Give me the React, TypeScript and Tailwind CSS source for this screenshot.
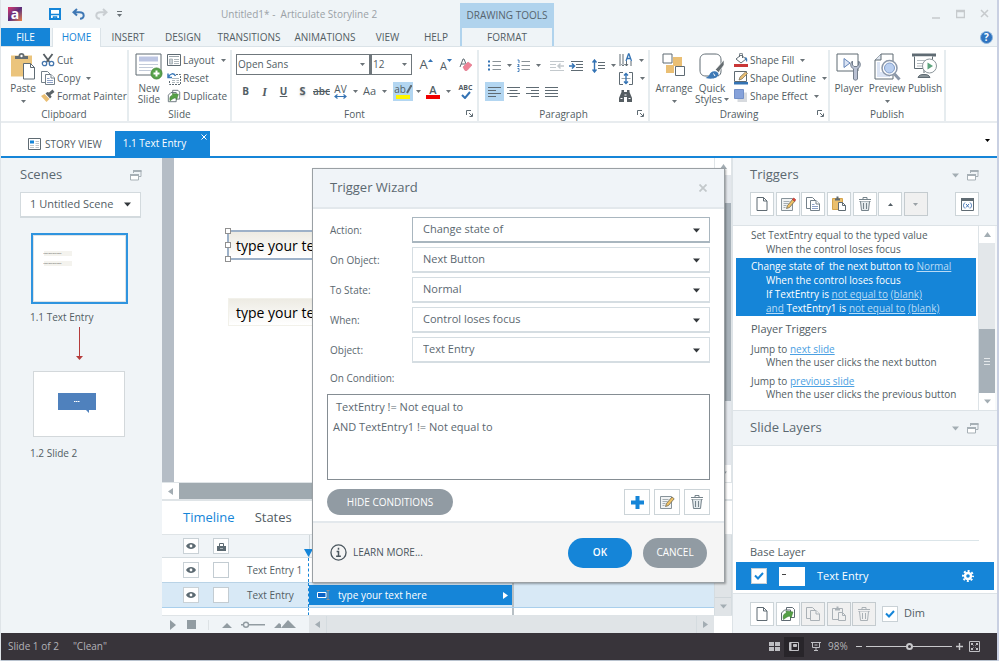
import type { ReactNode } from "react";

const INK = "#5f6b73";
const BLUE = "#1585d8";

function Svg({ box, className, children }: { box: string; className: string; children: ReactNode }) {
  return (
    <svg viewBox={box} className={`shrink-0 ${className}`} fill="none" stroke={INK} aria-hidden="true">
      {children}
    </svg>
  );
}

function Caret({ className = "text-[#6b7378]" }: { className?: string }) {
  return (
    <svg viewBox="0 0 5 3" className={`h-[3px] w-[5px] shrink-0 ${className}`} fill="currentColor" aria-hidden="true">
      <path d="M0 0h5L2.5 3z" />
    </svg>
  );
}

function Arrow({ dir, className = "text-[#a3adb3]" }: { dir: "up" | "down" | "left" | "right"; className?: string }) {
  const d = {
    up: "M0 6h7L3.500 1z",
    down: "M0 1.500h7L3.500 5.500z",
    left: "M6 0v7L1 3.500z",
    right: "M1 0v7L6 3.500z",
  }[dir];
  return (
    <svg viewBox="0 0 7 7" className={`size-[7px] shrink-0 ${className}`} fill="currentColor" aria-hidden="true">
      <path d={d} />
    </svg>
  );
}

/* ---------- icons ---------- */

const NewPageIcon = ({ className = "size-4" }: { className?: string }) => (
  <Svg box="0 0 16 16" className={className}>
    <path d="M3 1.500h6.500l3.500 3.500v9.500H3z" fill="#fff" />
    <path d="M9.500 1.500V5H13" />
  </Svg>
);

const CopyIcon = ({ muted = false }: { muted?: boolean }) => (
  <Svg box="0 0 16 16" className="size-4">
    <g stroke={muted ? "#aab1b6" : "#74818a"} fill={muted ? "#f0f0f0" : "#fff"}>
      <path d="M1.500 1.500h6l3 3v8h-9z" />
      <path d="M5.500 4.500h5.500l3.500 3.500v6.500h-9z" />
      <path d="M11 4.500V8h3.500" />
      {!muted && <path d="M7 8.500h2.500M7 10.500h6M7 12.500h6" stroke="#8ba0c6" />}
    </g>
  </Svg>
);

const ClipIcon = ({ muted = false }: { muted?: boolean }) => (
  <Svg box="0 0 16 16" className="size-4">
    <g stroke={muted ? "#aab1b6" : INK}>
      <path d="M1.500 2.500h10v11h-10z" fill={muted ? "#f0f0f0" : "#ebc06e"} stroke={muted ? "#aab1b6" : "#d4a44c"} />
      <path d="M4 3.500h5M5.500 1.500h2" strokeWidth="2" />
      <path d="M7.500 6.500h4l3 3v5h-7z" fill={muted ? "#f0f0f0" : "#fff"} />
      <path d="M11.500 6.500v3h3" />
    </g>
  </Svg>
);

const TrashIcon = ({ muted = false }: { muted?: boolean }) => (
  <Svg box="0 0 16 16" className="size-4">
    <g stroke={muted ? "#aab1b6" : "#75838b"}>
      <path d="M2 3.500h12M6 3V1.500h4V3" />
      <path d="M2.500 5.500h11" />
      <path d="M3.500 5.500l1 9h7l1-9" fill={muted ? "#f0f0f0" : "#e3e9ec"} />
      <path d="M6.500 7v6M9.500 7v6" />
    </g>
  </Svg>
);

const EditIcon = ({ red = false }: { red?: boolean }) => (
  <Svg box="0 0 16 16" className="size-4">
    <path d="M1.500 2.500h11v12h-11z" fill="#f1f3f4" stroke="#87939a" />
    <path d="M3.500 5.500h6M3.500 7.500h5M3.500 9.500h3M3.500 11.500h2" stroke="#a5aeb3" />
    <path d="M6.500 12.500l1-3L13 3l2.200 1.800L9.500 11.500z" fill="#efc164" stroke="#6f6a55" strokeWidth=".8" />
    {red && <path d="M12.500 3.500l1.200-1.500 2 1.700-1.200 1.500z" fill="#dd4a3e" stroke="#b8382e" strokeWidth=".8" />}
  </Svg>
);

const SlideDuplicateIcon = ({ className = "size-4" }: { className?: string }) => (
  <Svg box="0 0 16 16" className={className}>
    <path d="M6.500 1.500h6l2 2v8h-8z" fill="#fff" />
    <path d="M1.500 7l3-3h6v10.500h-9z" fill="#fff" />
    <path d="M3.500 13.500c-1-4 .5-6 3-6.500l-.5-2 7 1-2 6-1.500-2c-2 .5-3.500 1.500-6 3.500z" fill="#55a046" stroke="#3d7d34" strokeWidth=".6" />
  </Svg>
);

const RestoreIcon = () => (
  <Svg box="0 0 12 12" className="size-3">
    <g stroke="#a7b0b6">
      <path d="M3.500 4V1.500h7.500v6H9" />
      <path d="M3 2h8.500" strokeWidth="2" />
      <path d="M.5 5.500h8v5.500h-8z" fill="#fff" />
      <path d="M0 6h9" strokeWidth="2" />
    </g>
  </Svg>
);

const EyeIcon = () => (
  <svg viewBox="0 0 10 8" className="h-2 w-[10px]" fill="#5c6a72" aria-hidden="true">
    <path d="M0 4C2 0 8 0 10 4 8 8 2 8 0 4z" />
    <circle cx="5" cy="4" r="1.400" fill="#fff" />
  </svg>
);

const BackArrowIcon = ({ color, flip = false }: { color: string; flip?: boolean }) => (
  <svg viewBox="0 0 13 12" className={`h-3 w-[13px] ${flip ? "-scale-x-100" : ""}`} fill="none" stroke={color} strokeWidth="2" aria-hidden="true">
    <path d="M5 1L1.500 4.200 5 7.500M2 4.200h5.500c5.500 0 5.500 6.500.5 6.500" />
  </svg>
);

const PasteIcon = () => (
  <Svg box="0 0 24 27" className="h-[27px] w-6">
    <path d="M0 2.500h21v21H0z" fill="#ebc47c" stroke="none" />
    <path d="M4 6h13V3h-3.500a3 3 0 0 0-6 0H4z" fill="#646c70" stroke="none" />
    <circle cx="10.500" cy="3" r="1.200" fill="#fff" stroke="none" />
    <path d="M12.500 10.500h7l4 4v11.500h-11z" fill="#fff" />
    <path d="M19.500 10.500v4h4" />
  </Svg>
);

const CutIcon = () => (
  <Svg box="0 0 14 14" className="size-[14px]">
    <path d="M2.500 1l6 8M11.500 1l-6 8" stroke="#555d62" strokeWidth="1.800" />
    <circle cx="3.500" cy="10.500" r="2.200" stroke="#4476ad" strokeWidth="1.300" />
    <circle cx="10.500" cy="10.500" r="2.200" stroke="#4476ad" strokeWidth="1.300" />
  </Svg>
);

const PainterIcon = () => (
  <Svg box="0 0 14 14" className="size-[14px]">
    <path d="M0 7l3.500-2 5 5L5.500 13z" fill="#eabf74" stroke="none" />
    <path d="M4.500 4.500L9 9.500l1.700-1.700-1.200-1.800 4-3L11.500.5 8 3.500 6.300 3z" fill="#5b6368" stroke="none" />
  </Svg>
);

const NewSlideIcon = () => (
  <Svg box="0 0 28 27" className="h-[27px] w-7">
    <path d="M1 1h25v21H1z" fill="#fff" />
    <path d="M4 3.500h19v5H4z" fill="#bcc5e2" stroke="none" />
    <path d="M4 11.500h19M4 14.500h14M4 17.500h12" stroke="#c3cbd9" />
    <circle cx="21.500" cy="20.500" r="5.500" fill="#56a34a" stroke="#4b8c41" />
    <path d="M21.500 17.500v6M18.500 20.500h6" stroke="#fff" strokeWidth="2" />
  </Svg>
);

const LayoutIcon = () => (
  <Svg box="0 0 14 12" className="h-3 w-[14px]">
    <path d="M.5.500h13v11H.5z" fill="#fff" />
    <path d="M2 2.500h10" stroke="#9aa4aa" />
    <path d="M2.500 5h3v5h-3z" fill="#c9d0d4" stroke="#9aa4aa" strokeWidth=".7" />
    <path d="M7 5.500h5M7 7.500h5M7 9.500h5" stroke="#aeb7bc" />
  </Svg>
);

const ResetIcon = () => (
  <Svg box="0 0 14 13" className="h-[13px] w-[14px]">
    <path d="M9 2.500h4.500v10h-11V8" strokeDasharray="2 1" />
    <path d="M5 6.500h7M5 8.500h3M5 10.500h3M9.500 8.500H12M9.500 10.500H12" stroke="#aeb7bc" />
    <path d="M1 1.500v4h4M1.500 5C3 1.500 7 .5 8.500 4" stroke="#3b79b8" strokeWidth="1.500" />
  </Svg>
);

const LauncherIcon = () => (
  <Svg box="0 0 7 7" className="size-[7px]">
    <path d="M.5 5V.5H5M3 3l3 3M6.500 3.500v3h-3" />
  </Svg>
);

const ListIcon = ({ numbered = false }: { numbered?: boolean }) => (
  <Svg box="0 0 13 13" className="size-[13px]">
    <path d="M4.500 2.500H13M4.500 6.500H13M4.500 10.500H13" stroke="#8a9297" />
    {numbered ? (
      <path d="M.5 1H2v3M.5 5.500H2v1L.5 7.500H2.500M.5 9.500H2v3H.5" stroke="#3473b4" strokeWidth=".9" />
    ) : (
      <path d="M0 2.500h2M0 6.500h2M0 10.500h2" stroke="#3473b4" strokeWidth="2" />
    )}
  </Svg>
);

const IndentIcon = ({ out = false }: { out?: boolean }) => (
  <Svg box="0 0 14 10" className="h-[10px] w-[14px]">
    {out ? (
      <g stroke="#c3c9cd">
        <path d="M0 .5h14M0 3.500h6M0 6.500h6M0 9.500h14" />
        <path d="M14 5H8M10.500 2.500L8 5l2.500 2.500" strokeWidth="1.500" />
      </g>
    ) : (
      <g>
        <path d="M2 .5h12M7 3.500h7M7 6.500h7M2 9.500h12" />
        <path d="M0 5h5M3 2.500L5.500 5 3 7.500" stroke="#3473b4" strokeWidth="1.500" />
      </g>
    )}
  </Svg>
);

const SpacingIcon = () => (
  <Svg box="0 0 13 14" className="h-[14px] w-[13px]">
    <path d="M6 3.500h7M6 6.500h7M6 9.500h7" />
    <path d="M2.500 1v12M.5 3.500l2-2.500 2 2.500M.5 10.500l2 2.500 2-2.500" stroke="#3473b4" strokeWidth="1.400" />
  </Svg>
);

const AlignIcon = ({ d }: { d: string }) => (
  <Svg box="0 0 13 10" className="h-[10px] w-[13px]">
    <path d={d} />
  </Svg>
);

const TextDirIcon = () => (
  <Svg box="0 0 13 14" className="h-[14px] w-[13px]">
    <path d="M1 1v12M4 1v10M7.500 8v5M12 8v5M2.500 11l1.500 2 1.500-2M6 11l1.500 2L9 11" />
    <path d="M7 8l2.500-7h.5l2.500 7M8 5.500h3.500" stroke="#3473b4" strokeWidth="1.300" />
  </Svg>
);

const TextAlignIcon = () => (
  <Svg box="0 0 14 13" className="h-[13px] w-[14px]">
    <path d="M4 .5H.5v12H4M10 .5h3.500v12H10" />
    <path d="M2.500 6.500h9" stroke="#9aa4aa" />
    <path d="M7 1.500v10M5 3.500l2-2 2 2M5 9.500l2 2 2-2" stroke="#3473b4" strokeWidth="1.400" />
  </Svg>
);

const BinocularsIcon = () => (
  <Svg box="0 0 13 12" className="h-3 w-[13px]">
    <path d="M2.500 0h2.500v2h3V0h2.500v2L13 8v4H8V7H5v5H0V8l2.500-6z" fill="#555d62" stroke="none" />
    <path d="M1.500 8.500h2M9.500 8.500h2M5.500 5h2" stroke="#fff" />
  </Svg>
);

const ArrangeIcon = () => (
  <Svg box="0 0 24 25" className="h-[25px] w-6">
    <path d="M11 4h9v9h-9zM4 12h8v8H4z" fill="#eabf74" stroke="none" />
    <path d="M1 1h9v9H1zM13.500 13.500h9v9h-9z" fill="#fff" />
  </Svg>
);

const QuickStylesIcon = () => (
  <Svg box="0 0 26 27" className="h-[27px] w-[26px]">
    <path d="M15 23H7c-4 0-6-2-6-6V7c0-4 2-6 6-6h9c4 0 6 2 6 6v11c0 3-1 4-3 5" fill="#fff" />
    <path d="M25 7l-8.500 9.500 3 3L25 12z" fill="#646c70" stroke="#fff" strokeWidth=".6" />
    <path d="M17 18.500c-3-1-5.500.5-6.500 3-.7 1.800-2 2.700-4 3.500 6 1.500 12.500.5 13-3.500.1-1.500-1-2.500-2.500-3z" fill="#3f7ab6" stroke="none" />
    <path d="M14.500 20.500l1.500 2.500" stroke="#fff" />
  </Svg>
);

const FillIcon = () => (
  <Svg box="0 0 14 14" className="size-[14px]">
    <path d="M2 6l5-4 5 4-5 4zM5.500 4V1.500a1.500 1.500 0 0 1 3 0V5" fill="#fff" />
    <path d="M11.500 4c2 1 2 2.500 1.500 5-1-1-2-2.500-2-4z" fill="#3f7ab6" stroke="none" />
    <path d="M0 11h14v3H0z" fill="#c93636" stroke="none" />
  </Svg>
);

const OutlineIcon = () => (
  <Svg box="0 0 14 14" className="size-[14px]">
    <path d="M.5.500h12v10H.5z" fill="#fff" />
    <path d="M5 9l1-3 5.500-5 2 1.500L8 8z" fill="#eabf74" stroke="#716a55" strokeWidth=".7" />
    <path d="M0 11h14v2.500H0z" fill="#3473b4" stroke="none" />
  </Svg>
);

const EffectIcon = () => (
  <Svg box="0 0 14 14" className="size-[14px]">
    <path d="M3.500 3.500H13V13H3.500z" fill="#d7dade" stroke="none" />
    <path d="M.5.500h9v9h-9z" fill="#86a2da" stroke="#7390c8" />
  </Svg>
);

const PlayerIcon = () => (
  <Svg box="0 0 26 28" className="h-7 w-[26px]">
    <path d="M1 1h21v17H1z" fill="#fff" />
    <path d="M8 5.500v9l6-4.500z" fill="#dbe4f4" stroke="#6484b8" />
    <path d="M16.500 8c-3 2.500-2 6.500 1 7.800V26c.5 1.500 3.500 1.500 4 0V15.800c3-1.300 4-5.300 1-7.800v4l-1.500 1.500h-3L16.500 12z" fill="#b9c0d2" stroke="#737e8c" />
  </Svg>
);

const PreviewIcon = () => (
  <Svg box="0 0 27 28" className="h-7 w-[27px]">
    <path d="M7 1h12v25H1V7z" fill="#fff" />
    <path d="M1 7h6V1" fill="#dfe6f0" />
    <path d="M3 24h13v-5H6V9H3z" fill="#dbe4f4" stroke="none" />
    <circle cx="15.500" cy="15" r="7.500" fill="#fff" stroke="#8b97a8" strokeWidth="1.500" />
    <circle cx="15.500" cy="15" r="5" fill="#b9cff0" stroke="#7f9bc8" />
    <path d="M20.500 21l5 5.500" stroke="#8b97a8" strokeWidth="3" />
  </Svg>
);

const PublishIcon = () => (
  <Svg box="0 0 26 26" className="size-[26px]">
    <path d="M0 2h24" strokeWidth="3" />
    <path d="M2.500 3.500v12h18v-12" fill="#fff" />
    <path d="M5 7.500h8M5 10.500h6M5 13h5" stroke="#b4bcc1" />
    <path d="M12 16v4M6 24.500c1-2.500 3-3 6-3s5 .5 6 3z" fill="#8b959a" />
    <circle cx="17.500" cy="13" r="7" fill="#fff" stroke="#8b959a" />
    <path d="M15.500 9.500v7l5.500-3.500z" fill="#5da47e" stroke="none" />
  </Svg>
);

/* ---------- ribbon ---------- */

function Group({ label, className, launcher = false, children }: { label: string; className: string; launcher?: boolean; children: ReactNode }) {
  return (
    <section className={`relative mt-[3px] flex shrink-0 flex-col border-r-2 border-[#e6ecef] ${className}`}>
      <div className="flex h-[57px] shrink-0 items-start">{children}</div>
      <h2 className="text-center text-[10px] leading-[14px]">{label}</h2>
      {launcher && (
        <button aria-label={`${label} options`} className="absolute bottom-1 right-1">
          <LauncherIcon />
        </button>
      )}
    </section>
  );
}

function SmallButton({ icon, label, caret = false }: { icon: ReactNode; label: string; caret?: boolean }) {
  return (
    <button className="flex h-[18px] items-center gap-[2px] whitespace-nowrap">
      <span className="flex w-[14px] shrink-0 justify-center">{icon}</span>
      <span>{label}</span>
      {caret && <span className="ml-1"><Caret /></span>}
    </button>
  );
}

function BigButton({ icon, label, caret = false, className }: { icon: ReactNode; label: ReactNode; caret?: boolean; className: string }) {
  return (
    <button className={`flex shrink-0 flex-col items-center pt-[3px] leading-[11px] ${className}`}>
      <span className="flex h-[30px] items-start">{icon}</span>
      <span>{label}</span>
      {caret && <span className="pt-[6px]"><Caret /></span>}
    </button>
  );
}

function Tool({ label, className = "w-[19px]", children }: { label: string; className?: string; children: ReactNode }) {
  return (
    <button aria-label={label} className={`flex h-[19px] shrink-0 items-center justify-center ${className}`}>
      {children}
    </button>
  );
}

function FontSelect({ value, label, className }: { value: string; label: string; className: string }) {
  return (
    <span className={`relative flex shrink-0 border border-[#6f777c] bg-white ${className}`}>
      <select aria-label={label} className="h-[19px] w-full appearance-none bg-transparent px-[1px]">
        <option>{value}</option>
      </select>
      <span className="pointer-events-none absolute right-1 top-2"><Caret /></span>
    </span>
  );
}

function Ribbon() {
  return (
    <div className="flex h-[76px] shrink-0 overflow-hidden border-b-2 border-[#e8ecef] bg-white text-[10px] text-[#525d64]">
      <Group label="Clipboard" className="w-[128px]">
        <BigButton className="ml-2 w-7" icon={<PasteIcon />} label="Paste" caret />
        <div className="ml-[4px] pt-px">
          <SmallButton icon={<CutIcon />} label="Cut" />
          <SmallButton icon={<CopyIcon />} label="Copy" caret />
          <SmallButton icon={<PainterIcon />} label="Format Painter" />
        </div>
      </Group>
      <Group label="Slide" className="w-[103px]">
        <BigButton className="ml-[5px] w-[30px]" icon={<NewSlideIcon />} label={<>New<br />Slide</>} />
        <div className="ml-[3px] pt-px">
          <SmallButton icon={<LayoutIcon />} label="Layout" caret />
          <SmallButton icon={<ResetIcon />} label="Reset" />
          <SmallButton icon={<SlideDuplicateIcon className="size-[14px]" />} label="Duplicate" />
        </div>
      </Group>
      <Group label="Font" className="w-[247px]" launcher>
        <div className="ml-1">
          <div className="mt-1 flex items-center">
            <FontSelect label="Font family" value="Open Sans" className="w-[134px]" />
            <FontSelect label="Font size" value="12" className="w-[42px] border-l-2" />
            <Tool label="Grow font" className="ml-1 w-5 items-end pb-[3px] text-[13px] leading-none">
              A<Caret className="mb-[9px] -scale-y-100 text-[#3473b4]" />
            </Tool>
            <Tool label="Shrink font" className="w-5 items-end pb-[3px] text-[11px] leading-none">
              A<Caret className="mb-[9px] text-[#3473b4]" />
            </Tool>
            <Tool label="Clear formatting">
              <Svg box="0 0 13 13" className="size-[13px]">
                <path d="M1 9L4 1h1l2 5M2 6h4" />
                <path d="M4 9l5-5 4 3-5 5.500H6z" fill="#ee8296" stroke="#dd7186" strokeWidth=".6" />
              </Svg>
            </Tool>
          </div>
          <div className="mt-[7px] flex items-center">
            <Tool label="Bold"><b>B</b></Tool>
            <Tool label="Italic"><i className="font-['Liberation_Serif',serif] text-[12px] font-bold">I</i></Tool>
            <Tool label="Underline"><b className="underline">U</b></Tool>
            <Tool label="Shadow"><b className="text-[11px] text-shadow-md">S</b></Tool>
            <Tool label="Strikethrough"><s className="font-semibold">abc</s></Tool>
            <Tool label="Character spacing" className="w-[19px] flex-col">
              <span className="leading-[10px]">AV</span>
              <Svg box="0 0 13 5" className="h-[5px] w-[13px]">
                <path d="M1 2.500h11M3.500.5l-2.500 2 2.500 2M9.500.5l2.500 2-2.500 2" stroke="#3473b4" strokeWidth="1.200" />
              </Svg>
            </Tool>
            <Tool label="Spacing options" className="w-[10px]"><Caret /></Tool>
            <Tool label="Change case"><span className="text-[11px]">Aa</span></Tool>
            <Tool label="Case options" className="w-[10px]"><Caret /></Tool>
            <Tool label="Highlight" className="ml-1 w-5 flex-col bg-[#b3d6f1]">
              <span className="flex items-center leading-[11px]">
                ab
                <Svg box="0 0 6 9" className="h-[9px] w-[6px]">
                  <path d="M5.500 0L1 8" strokeWidth="2" />
                </Svg>
              </span>
              <span className="h-1 w-[14px] bg-[#fff600]" />
            </Tool>
            <Tool label="Highlight options" className="w-[10px]"><Caret /></Tool>
            <Tool label="Font color" className="w-5 flex-col">
              <span className="text-[11px] font-semibold leading-[11px]">A</span>
              <span className="h-1 w-[14px] bg-[#f00000]" />
            </Tool>
            <Tool label="Color options" className="w-[10px]"><Caret /></Tool>
            <Tool label="Spelling" className="ml-[3px] w-[19px] flex-col">
              <span className="text-[7px] font-bold leading-[7px]">ABC</span>
              <Svg box="0 0 10 8" className="h-2 w-[10px]">
                <path d="M1 4l3 3 5-6" stroke="#3473b4" strokeWidth="2" />
              </Svg>
            </Tool>
          </div>
        </div>
      </Group>
      <Group label="Paragraph" className="w-[171px]" launcher>
        <div className="ml-[6px] w-[134px] shrink-0">
          <div className="mt-[6px] flex items-center">
            <Tool label="Bullets"><ListIcon /></Tool>
            <Tool label="Bullet options" className="w-[10px]"><Caret /></Tool>
            <Tool label="Numbering"><ListIcon numbered /></Tool>
            <Tool label="Numbering options" className="w-[10px]"><Caret /></Tool>
            <Tool label="Decrease indent" className="ml-1 w-[19px]"><IndentIcon out /></Tool>
            <Tool label="Increase indent"><IndentIcon /></Tool>
            <Tool label="Line spacing" className="ml-1 w-[19px]"><SpacingIcon /></Tool>
            <Tool label="Line spacing options" className="w-[10px]"><Caret /></Tool>
          </div>
          <div className="mt-[7px] flex items-center">
            <Tool label="Align left" className="w-[19px] bg-[#b3d6f1]"><AlignIcon d="M0 .5h13M0 3.500h8M0 6.500h13M0 9.500h8" /></Tool>
            <Tool label="Center"><AlignIcon d="M0 .5h13M2.500 3.500h8M0 6.500h13M2.500 9.500h8" /></Tool>
            <Tool label="Align right"><AlignIcon d="M0 .5h13M5 3.500h8M0 6.500h13M5 9.500h8" /></Tool>
            <Tool label="Justify"><AlignIcon d="M0 .5h13M0 3.500h13M0 6.500h13M0 9.500h13" /></Tool>
          </div>
        </div>
        <div className="flex flex-col pt-px">
          {[<TextDirIcon key="d" />, <TextAlignIcon key="a" />, <BinocularsIcon key="b" />].map((icon, i) => (
            <button key={i} aria-label={["Text direction", "Align text", "Find"][i]} className="flex h-[18px] items-center gap-[7px]">
              {icon}
              {i < 2 && <Caret />}
            </button>
          ))}
        </div>
      </Group>
      <Group label="Drawing" className="w-[180px]" launcher>
        <BigButton className="ml-[5px] w-[38px]" icon={<ArrangeIcon />} label="Arrange" caret />
        <BigButton
          className="w-[38px]"
          icon={<QuickStylesIcon />}
          label={<>Quick<span className="flex items-center gap-[2px]">Styles<Caret /></span></>}
        />
        <div className="ml-[3px] pt-px">
          <SmallButton icon={<FillIcon />} label="Shape Fill" caret />
          <SmallButton icon={<OutlineIcon />} label="Shape Outline" caret />
          <SmallButton icon={<EffectIcon />} label="Shape Effect" caret />
        </div>
      </Group>
      <Group label="Publish" className="w-[116px]">
        <BigButton className="w-[38px]" icon={<PlayerIcon />} label="Player" />
        <BigButton className="w-[38px]" icon={<PreviewIcon />} label="Preview" caret />
        <BigButton className="w-[38px]" icon={<PublishIcon />} label="Publish" />
      </Group>
    </div>
  );
}

/* ---------- title bar and tabs ---------- */

const tabs = [
  ["INSERT", "w-[54px]"],
  ["DESIGN", "w-[56px]"],
  ["TRANSITIONS", "w-[76px]"],
  ["ANIMATIONS", "w-[76px]"],
  ["VIEW", "w-[49px]"],
  ["HELP", "w-[48px]"],
];

function Header() {
  return (
    <header className="flex shrink-0 flex-col bg-[#eff4f7]">
      <div className="flex h-7 items-center">
        <span className="ml-[7px] flex size-[14px] items-center justify-center bg-linear-to-br from-[#e0306a] via-[#5a2a7a] to-[#f08030] text-[14px] font-bold leading-none text-white">a</span>
        <button aria-label="Save" className="ml-[27px]">
          <Svg box="0 0 12 12" className="size-3">
            <path d="M1 1h10v10H1z" fill="#fff" stroke={BLUE} strokeWidth="2" />
            <path d="M2 6.500h8M4.500 11V9h3v2" stroke={BLUE} strokeWidth="1.500" />
          </Svg>
        </button>
        <button aria-label="Undo" className="ml-[11px]"><BackArrowIcon color="#3f78b5" /></button>
        <button aria-label="Redo" className="ml-[10px]"><BackArrowIcon color="#c9ced2" flip /></button>
        <button aria-label="Customize toolbar" className="ml-[9px] border-t border-[#6b7378] pt-[2px]"><Caret /></button>
        <h1 className="ml-[99px] w-[239px] text-[10px] text-[#9aa1a6]">Untitled1* -&nbsp; Articulate Storyline 2</h1>
        <span className="mt-[3px] flex h-[25px] w-[94px] items-center justify-center bg-[#b0d3ed] text-[10px] text-[#56646e]">DRAWING TOOLS</span>
        <div className="ml-auto mr-2 flex items-center gap-[15px]">
          {["M0 9h8", "M.5 1.500h8v7h-8zM.5 2.500h8", "M1 1l7 7M8 1L1 8"].map((d, i) => (
            <button key={d} aria-label={["Minimize", "Maximize", "Close"][i]}>
              <svg viewBox="0 0 9 10" className="h-[10px] w-[9px]" fill="none" stroke="#c6cacd" strokeWidth="1.500"><path d={d} /></svg>
            </button>
          ))}
        </div>
      </div>
      <nav className="flex h-[19px] items-stretch border-b border-[#dbe3e8] text-[10px] text-[#525d64]">
        <button className="w-[49px] bg-[#1585d8] font-medium text-white">FILE</button>
        <button className="-mb-px ml-[2px] w-[49px] border-x border-[#dbe3e8] bg-white font-medium text-[#1585d8]">HOME</button>
        {tabs.map(([name, width]) => (
          <button key={name} className={width}>{name}</button>
        ))}
        <button className="w-[94px] border-x-2 border-[#b0d3ed]">FORMAT</button>
        <button aria-label="Help" className="ml-auto mr-1 flex size-[13px] items-center justify-center self-center rounded-full border border-[#8fb6dd] bg-[#2f74c0] text-[10px] font-bold leading-none text-white">?</button>
      </nav>
    </header>
  );
}

function DocumentTabs() {
  return (
    <div className="flex h-[35px] shrink-0 items-end border-b-2 border-[#1585d8] bg-white text-[10px]">
      <button className="ml-[27px] flex h-6 items-center gap-1 text-[#525d64]">
        <Svg box="0 0 13 12" className="h-3 w-[13px]">
          <path d="M.5.500h12v11H.5z" fill="#fff" />
          <path d="M2 2.500h4v3H2z" fill={BLUE} stroke="none" />
          <path d="M7.500 3.500H11M7.500 5.500H11M2 7.500h4M2 9.500h4M7.500 7.500H11M7.500 9.500H11" stroke="#c0c6ca" />
        </Svg>
        STORY VIEW
      </button>
      <div className="relative ml-[13px] flex h-[25px] w-[95px] items-center bg-[#1585d8] pl-2 text-white">
        1.1 Text Entry
        <button aria-label="Close tab" className="absolute right-[3px] top-[3px]">
          <svg viewBox="0 0 6 6" className="size-[6px]" stroke="#fff"><path d="M.5.5l5 5M5.500.5l-5 5" /></svg>
        </button>
      </div>
      <button aria-label="Open tabs" className="mb-[14px] ml-auto mr-[7px]"><Caret className="text-black" /></button>
    </div>
  );
}

/* ---------- scenes ---------- */

function ScenesPanel() {
  return (
    <aside className="flex w-[161px] shrink-0 flex-col bg-[#f0f4f7] text-[10px] text-[#525d64]">
      <div className="flex h-[34px] items-center justify-between pl-[19px] pr-5">
        <h2 className="text-[13px] text-[#5b6870]">Scenes</h2>
        <button aria-label="Undock scenes"><RestoreIcon /></button>
      </div>
      <div className="relative ml-[19px] w-[121px]">
        <select aria-label="Scene" className="h-[26px] w-full appearance-none border border-b-2 border-[#d3dade] bg-white pl-[9px] text-[11px]">
          <option>1 Untitled Scene</option>
        </select>
        <span className="pointer-events-none absolute right-[10px] top-[9px]"><Arrow dir="down" className="text-[#33383c]" /></span>
      </div>
      <figure className="mt-[15px] flex w-[156px] flex-col items-center">
        <div className="h-[71px] w-[97px] border-2 border-[#2f94df] bg-white">
          <div className="flex h-full flex-col gap-1 border border-[#dfe3e6] pl-[10px] pt-[15px] text-[2px] leading-[5px] text-[#333]">
            <span className="w-7 bg-[#f4f3ee]">type your text here</span>
            <span className="mt-px w-7 bg-[#f4f3ee]">type your text here</span>
          </div>
        </div>
        <figcaption className="mt-[6px] self-start pl-[29px] leading-[14px]">1.1 Text Entry</figcaption>
      </figure>
      <svg viewBox="0 0 9 34" className="ml-[74px] mt-[3px] h-[34px] w-[9px]" aria-hidden="true">
        <path d="M4.500 0v30" stroke="#b53b3b" />
        <path d="M1 29h7L4.500 33z" fill="#b53b3b" />
      </svg>
      <figure className="mt-[10px] flex w-[156px] flex-col items-center">
        <div className="flex h-[66px] w-[92px] items-start justify-center border border-[#d3d8db] bg-white pr-1 pt-[21px]">
          <svg viewBox="0 0 38 20" className="h-5 w-[38px]" aria-hidden="true">
            <path d="M0 0h38v17h-7v3l-3-3H0z" fill="#4f81bd" />
            <path d="M16 8.500h6" stroke="#fff" strokeDasharray="1.500 .5" />
          </svg>
        </div>
        <figcaption className="mt-[9px] self-start pl-[29px] leading-[14px]">1.2 Slide 2</figcaption>
      </figure>
    </aside>
  );
}

/* ---------- stage and timeline ---------- */

function Stage() {
  return (
    <div className="flex min-h-0 flex-1">
      <div className="w-3 shrink-0 bg-[#b5bdc6]" />
      <div className="relative flex-1 overflow-hidden bg-white text-[14px] text-black">
        <div className="absolute left-[53px] top-[72px] flex h-[30px] w-[260px] items-center border-2 border-[#9db1c8] bg-linear-to-b from-[#edebe3] to-white pl-[7px]">
          type your text here
          <span className="absolute -left-[4px] -top-[4px] size-[6px] border border-[#909090] bg-white" />
          <span className="absolute -left-[4px] top-[10px] size-[6px] border border-[#909090] bg-white" />
          <span className="absolute -bottom-[4px] -left-[4px] size-[6px] border border-[#909090] bg-white" />
        </div>
        <div className="absolute left-[54px] top-[140px] flex h-[28px] w-[258px] items-center border border-[#f2f1ea] bg-linear-to-b from-[#edebe3] to-white pl-[7px]">
          type your text here
        </div>
      </div>
      <div className="flex w-[18px] shrink-0 flex-col border-x border-[#dfe4e7] bg-[#e3e7ec]">
        <button aria-label="Scroll up" className="flex h-[17px] items-center justify-center bg-white"><Arrow dir="up" /></button>
        <div className="mt-7 h-[198px] bg-[#a7b1b9]" />
        <button aria-label="Scroll down" className="mt-auto flex h-[17px] items-center justify-center bg-white"><Arrow dir="down" /></button>
      </div>
    </div>
  );
}

const iconBox = "flex size-4 items-center justify-center border border-[#c9d1d6] bg-white";

function TimelineRow({ name, selected = false, children }: { name: string; selected?: boolean; children?: ReactNode }) {
  return (
    <div className={`flex h-[25px] border-b ${selected ? "border-[#a9cfec] bg-[#d8e9f6]" : "border-[#b9d3e6] bg-white"}`}>
      <div className="flex w-[147px] shrink-0 items-center border-r border-dashed border-[#1585d8] pl-[21px]">
        <button aria-label={`Show ${name}`} className={iconBox}><EyeIcon /></button>
        <input type="checkbox" aria-label={`Lock ${name}`} className="ml-[14px] size-4 shrink-0 appearance-none border border-[#c3ccd2] bg-white" />
        <span className="ml-[18px] flex-1 whitespace-nowrap">{name}</span>
      </div>
      {children}
    </div>
  );
}

function Timeline() {
  return (
    <section className="shrink-0 text-[10px] text-[#525d64]">
      <div className="flex h-[35px] items-center gap-5 border-y border-[#dfe4e7] bg-white pl-[21px] text-[13px]">
        <button className="text-[#1585d8]">Timeline</button>
        <button>States</button>
      </div>
      <div className="flex">
        <div className="relative min-w-0 flex-1">
          <div className="flex h-[23px] border-b border-[#d5dce0] bg-[#f0f4f7]">
            <div className="flex w-[148px] items-center border-r border-[#cfd6da] pl-[21px]">
              <span className={iconBox}><EyeIcon /></span>
              <span className={`${iconBox} ml-[14px]`}>
                <svg viewBox="0 0 9 9" className="size-[9px]" aria-hidden="true">
                  <path d="M2.500 5V1.500h4V5" fill="none" stroke="#5c6a72" />
                  <path d="M0 4h9v5H0z" fill="#5c6a72" />
                  <path d="M3 6.500h3" stroke="#a9b2b7" />
                </svg>
              </span>
            </div>
          </div>
          <svg viewBox="0 0 9 8" className="absolute left-[142px] top-[14px] h-2 w-[9px]" fill={BLUE} aria-hidden="true"><path d="M0 0h9L4.500 8z" /></svg>
          <TimelineRow name="Text Entry 1" />
          <TimelineRow name="Text Entry" selected>
            <div className="my-[2px] flex w-[203px] items-center bg-[#1585d8] pl-2 pr-[3px] text-white">
              <Svg box="0 0 13 10" className="h-[10px] w-[13px]">
                <path d="M.5 2.500h8.500v5H.5z" fill="#0b62c4" stroke="#fff" />
                <path d="M9.500 .5h3M9.500 9.500h3M11 1v8" stroke="#8f8f94" />
              </Svg>
              <span className="ml-2 flex-1">type your text here</span>
              <Arrow dir="right" className="text-white" />
            </div>
            <div className="w-[2px] bg-[#b8c0c5]" />
          </TimelineRow>
          <div className="flex h-[7px] bg-white">
            <div className="w-[147px] border-r border-dashed border-[#1585d8]" />
            <div className="w-[205px] border-r-2 border-[#b8c0c5]" />
          </div>
        </div>
        <div className="flex w-[18px] flex-col justify-end border-x border-[#d5dce0] bg-[#e0e4e7]">
          <button aria-label="Scroll timeline down" className="flex h-[18px] items-center justify-center border-t border-[#cfd6da]"><Arrow dir="down" /></button>
        </div>
      </div>
      <div className="flex h-[18px] items-stretch border-t border-[#dfe4e7]">
        <div className="flex w-[147px] items-center bg-[#f0f4f7] pl-2 text-[#929ca2]">
          <button aria-label="Play">
            <svg viewBox="0 0 6 10" className="h-[10px] w-[6px]" fill="currentColor"><path d="M0 0l6 5-6 5z" /></svg>
          </button>
          <button aria-label="Stop" className="ml-[11px] size-[9px] bg-[#929ca2]" />
          <span className="ml-3 h-[10px] w-px bg-[#dde2e5]" />
          <svg viewBox="0 0 74 9" className="ml-[13px] h-[9px] w-[74px]" fill="currentColor" aria-hidden="true">
            <path d="M0 8l5-5 5 5zM52 8l5-5 2 1.500v3.500zM59 8l7-8 8 8zM27 4h16v1.500H27z" />
            <path d="M19 4h3v1.500h-3z" />
            <circle cx="24" cy="4.700" r="2.500" fill="none" stroke="currentColor" strokeWidth="1.400" />
          </svg>
        </div>
        <div className="flex flex-1 items-center justify-between bg-[#e0e4e7]">
          <button aria-label="Scroll left" className="flex h-full w-[18px] items-center justify-center border-r border-[#d5dce0]"><Arrow dir="left" /></button>
          <button aria-label="Scroll right" className="flex h-full w-[18px] items-center justify-center border-l border-[#d5dce0]"><Arrow dir="right" /></button>
        </div>
        <div className="w-[18px] bg-white" />
      </div>
    </section>
  );
}

/* ---------- right side ---------- */

const toolBase = "flex size-6 items-center justify-center border border-[#ccd4d8] bg-white";
const toolMuted = "flex size-6 items-center justify-center border border-[#c4cbcf] bg-[#f0f0f0]";
const dialogTool = "flex size-[26px] items-center justify-center border border-[#ccd4d8] bg-white";
const linkLight = "text-[#b9dbf5] underline";
const linkBlue = "text-[#4ba0e2] underline";

function PanelTitle({ title, className }: { title: string; className: string }) {
  return (
    <div className={`flex items-center pl-[17px] pr-[18px] ${className}`}>
      <h2 className="flex-1 text-[13px] text-[#5b6870]">{title}</h2>
      <button aria-label={`${title} menu`} className="mr-2"><Arrow dir="down" /></button>
      <button aria-label={`Undock ${title}`}><RestoreIcon /></button>
    </div>
  );
}

function TriggersPanel() {
  return (
    <section className="border-b border-[#dde3e7]">
      <PanelTitle title="Triggers" className="h-[34px]" />
      <div className="flex h-[34px] items-start justify-between border-b border-[#dde3e7] pl-[17px] pr-[18px]">
        <div className="flex w-[178px] justify-between">
          <button aria-label="New trigger" className={toolBase}><NewPageIcon /></button>
          <button aria-label="Edit trigger" className={toolBase}><EditIcon red /></button>
          <button aria-label="Copy trigger" className={toolBase}><CopyIcon /></button>
          <button aria-label="Paste trigger" className={toolBase}><ClipIcon /></button>
          <button aria-label="Delete trigger" className={toolBase}><TrashIcon /></button>
          <button aria-label="Move up" className={toolBase}><Caret className="-scale-y-100" /></button>
          <button aria-label="Move down" className={toolMuted}><Caret className="text-[#9aa1a6]" /></button>
        </div>
        <button aria-label="Variables" className={toolBase}>
          <Svg box="0 0 13 13" className="size-[13px]">
            <path d="M.5.500h12v12H.5z" fill="#fff" />
            <path d="M0 1.500h13" strokeWidth="3" />
            <path d="M4 4.500c-2 2-2 4 0 6M9 4.500c2 2 2 4 0 6M5 6l3 3.500M8 6L5 9.500" stroke="#3f72b5" />
          </Svg>
        </button>
      </div>
      <div className="flex h-[184px] bg-white">
        <div className="flex-1 pl-[3px] pr-[2px] leading-[14px]">
          <p className="pl-[15px] pt-[2px]">Set TextEntry equal to the typed value</p>
          <p className="pl-[30px]">When the control loses focus</p>
          <div className="mt-[2px] bg-[#1585d8] py-px pl-[15px] text-white">
            <p>Change state of&nbsp; the next button to <a href="#normal" className={linkLight}>Normal</a></p>
            <p className="pl-[15px]">When the control loses focus</p>
            <p className="pl-[15px]">If TextEntry is <a href="#operator" className={linkLight}>not equal to</a> <a href="#blank" className={linkLight}>(blank)</a></p>
            <p className="pl-[15px]"><a href="#and" className={linkLight}>and</a> TextEntry1 is <a href="#operator1" className={linkLight}>not equal to</a> <a href="#blank1" className={linkLight}>(blank)</a></p>
          </div>
          <h3 className="pl-[15px] pt-[6px] text-[11px]">Player Triggers</h3>
          <p className="pl-[15px] pt-[6px]">Jump to <a href="#next" className={linkBlue}>next slide</a></p>
          <p className="pl-[30px] leading-[13px]">When the user clicks the next button</p>
          <p className="pl-[15px] pt-[5px]">Jump to <a href="#previous" className={linkBlue}>previous slide</a></p>
          <p className="pl-[30px] leading-[13px]">When the user clicks the previous button</p>
        </div>
        <div className="flex w-[17px] flex-col border-l border-[#dde3e7] bg-[#e3e7ea]">
          <button aria-label="Scroll triggers up" className="flex h-[17px] items-center justify-center bg-white"><Arrow dir="up" /></button>
          <div className="mt-auto flex h-16 items-center justify-center bg-[#a7b1b9]">
            <svg viewBox="0 0 6 7" className="h-[7px] w-[6px]" stroke="#e3e7ea"><path d="M0 .5h6M0 3.500h6M0 6.500h6" /></svg>
          </div>
          <button aria-label="Scroll triggers down" className="flex h-[17px] items-center justify-center bg-white"><Arrow dir="down" /></button>
        </div>
        <div className="w-[2px] bg-[#f7f9fa]" />
      </div>
    </section>
  );
}

function CheckBox({ id, label, className }: { id: string; label?: string; className: string }) {
  return (
    <span className={`relative flex shrink-0 items-center justify-center border border-[#c9d1d6] bg-white ${className}`}>
      <input id={id} type="checkbox" defaultChecked aria-label={label} className="peer size-full appearance-none" />
      <svg viewBox="0 0 10 8" className="pointer-events-none absolute h-2 w-[10px] opacity-0 peer-checked:opacity-100" fill="none" stroke={BLUE} strokeWidth="2"><path d="M1 3.500L4 6.500 9 1" /></svg>
    </span>
  );
}

function LayersPanel() {
  return (
    <section className="flex min-h-0 flex-1 flex-col">
      <PanelTitle title="Slide Layers" className="h-[35px] border-b border-[#dde3e7]" />
      <div className="flex flex-1 flex-col justify-end bg-white">
        <h3 className="ml-[17px] mr-[18px] border-t border-[#dbe5e9] pb-[3px] pt-1 text-[11px] leading-[14px]">Base Layer</h3>
        <div className="ml-[3px] mr-[3px] flex h-7 items-center bg-[#1585d8] pl-[15px] pr-5 text-white">
          <CheckBox id="base-layer" label="Show base layer" className="size-4" />
          <span className="ml-3 block h-[19px] w-[26px] bg-white pl-[3px] pt-[7px]"><span className="block h-px w-1 bg-[#444]" /></span>
          <span className="ml-3 flex-1 text-[11px]">Text Entry</span>
          <button aria-label="Layer settings">
            <svg viewBox="0 0 12 12" className="size-3" fill="none" stroke="#fff" aria-hidden="true">
              <circle cx="6" cy="6" r="3" strokeWidth="2.400" />
              <circle cx="6" cy="6" r="5" strokeWidth="2" strokeDasharray="2 1.930" strokeDashoffset="1" />
            </svg>
          </button>
        </div>
        <div className="h-[3px]" />
      </div>
      <div className="flex h-10 items-center border-t border-[#dde3e7] pl-[17px]">
        <div className="flex w-[126px] justify-between">
          <button aria-label="New layer" className={toolBase}><NewPageIcon /></button>
          <button aria-label="Duplicate layer" className={toolBase}><SlideDuplicateIcon /></button>
          <button aria-label="Copy layer" className={toolMuted}><CopyIcon muted /></button>
          <button aria-label="Paste layer" className={toolMuted}><ClipIcon muted /></button>
          <button aria-label="Delete layer" className={toolMuted}><TrashIcon muted /></button>
        </div>
        <CheckBox id="dim" className="ml-[6px] size-4" />
        <label htmlFor="dim" className="ml-[6px] text-[11px]">Dim</label>
      </div>
    </section>
  );
}

/* ---------- dialog ---------- */

const fields = [
  ["Action:", "Change state of", "border-[#a9b6bf]"],
  ["On Object:", "Next Button", "border-[#d5dde2]"],
  ["To State:", "Normal", "border-[#d5dde2]"],
  ["When:", "Control loses focus", "border-[#d5dde2]"],
  ["Object:", "Text Entry", "border-[#d5dde2]"],
];

function TriggerWizard() {
  return (
    <div role="dialog" aria-labelledby="wizard-title" className="absolute left-[311px] top-[168px] w-[413px] border border-[#9aa0a4] bg-white text-[#5b6870] shadow-[1px_1px_2px_rgba(0,0,0,0.35)]">
      <div className="flex h-[40px] items-center justify-between border-b-2 border-[#e3e8ec] bg-[#f0f4f8] pl-[17px] pr-[17px]">
        <h2 id="wizard-title" className="text-[13px]">Trigger Wizard</h2>
        <button aria-label="Close">
          <svg viewBox="0 0 8 8" className="size-2" stroke="#c3c8cb" strokeWidth="1.800"><path d="M.5.5l7 7M7.500.5l-7 7" /></svg>
        </button>
      </div>
      <div className="px-[14px] pt-2">
        <div className="flex flex-col gap-1">
          {fields.map(([label, value, border]) => (
            <div key={label} className="relative flex items-center pl-[3px]">
              <label htmlFor={label} className="w-[82px] text-[10px]">{label}</label>
              <select id={label} className={`h-[26px] flex-1 appearance-none border border-b-2 bg-white pl-[10px] text-[11px] ${border}`}>
                <option>{value}</option>
              </select>
              <span className="pointer-events-none absolute right-[10px]"><Arrow dir="down" className="text-[#33383c]" /></span>
            </div>
          ))}
        </div>
        <h3 className="h-[31px] pl-[3px] pt-[8px] text-[10px] leading-[15px]">On Condition:</h3>
        <ul className="h-[86px] border border-[#858d93] pl-[5px] pt-[2px] text-[11px] leading-5">
          <li className="pl-[3px]">TextEntry != Not equal to</li>
          <li>AND TextEntry1 != Not equal to</li>
        </ul>
        <div className="flex items-center gap-1 pb-[6px] pt-[9px]">
          <button className="mr-auto h-[26px] w-[126px] rounded-full bg-[#919ba3] text-[10px] font-medium text-white">HIDE CONDITIONS</button>
          <button aria-label="Add condition" className={dialogTool}>
            <svg viewBox="0 0 13 13" className="size-[13px]" stroke={BLUE} strokeWidth="4"><path d="M6.500 0v13M0 6.500h13" /></svg>
          </button>
          <button aria-label="Edit condition" className={dialogTool}><EditIcon /></button>
          <button aria-label="Delete condition" className={dialogTool}><TrashIcon /></button>
        </div>
      </div>
      <div className="flex h-[61px] items-center border-t-2 border-[#e3e8ec] bg-[#f5f5f5] pl-[17px] pr-[17px] text-[10px]">
        <a href="#learn-more" className="mr-auto flex items-center gap-[6px] text-[#4a565e]">
          <Svg box="0 0 18 18" className="size-[17px]">
            <circle cx="9" cy="9" r="8" stroke="#4a565e" strokeWidth="1.400" />
            <path d="M9 4v2M7 8h2v5M6.500 13h5" stroke="#4a565e" strokeWidth="1.600" />
          </Svg>
          LEARN MORE...
        </a>
        <button className="h-[30px] w-16 rounded-full bg-[#1585d8] font-semibold text-white">OK</button>
        <button className="ml-[11px] h-[30px] w-16 rounded-full bg-[#919ba3] font-medium text-white">CANCEL</button>
      </div>
    </div>
  );
}

function StatusBar() {
  return (
    <footer className="flex h-[28px] shrink-0 items-center border-b border-[#b9c3cf] bg-[#38343a] pl-[7px] text-[10px] text-[#b3b3b8]">
      <span>Slide 1 of 2</span>
      <span className="ml-[14px]">"Clean"</span>
      <div className="ml-auto mr-[17px] flex items-center">
        <button aria-label="Story view" className="flex size-5 items-center justify-center">
          <svg viewBox="0 0 11 9" className="h-[9px] w-[11px]" fill="#bfbfc3"><path d="M0 0h5v4H0zM6 0h5v4H6zM0 5h5v4H0zM6 5h5v4H6z" /></svg>
        </button>
        <button aria-label="Slide view" className="flex size-5 items-center justify-center bg-[#28252a]">
          <svg viewBox="0 0 10 9" className="h-[9px] w-[10px]" fill="none" stroke="#bfbfc3"><path d="M.5.500h9v8h-9z" /><path d="M1.500 1v7" strokeWidth="2" /><path d="M4.500 2.500h3v2h-3z" fill="#bfbfc3" /></svg>
        </button>
        <button aria-label="Preview" className="flex w-[24px] items-center justify-center">
          <svg viewBox="0 0 10 9" className="h-[9px] w-[10px]" fill="none" stroke="#bfbfc3"><path d="M0 .5h10M1.500 1v4.500h7V1M5 5.500v3M3 8.500h4M3.500 3h3" /></svg>
        </button>
        <span className="w-[28px]">98%</span>
        <button aria-label="Zoom out" className="h-px w-[6px] bg-[#c8c8cb]" />
        <input
          type="range"
          aria-label="Zoom"
          defaultValue={50}
          className="mx-1 h-[10px] w-[86px] appearance-none bg-transparent [&::-webkit-slider-runnable-track]:h-px [&::-webkit-slider-runnable-track]:bg-[#c8c8cb] [&::-webkit-slider-thumb]:-mt-[3px] [&::-webkit-slider-thumb]:size-[7px] [&::-webkit-slider-thumb]:appearance-none [&::-webkit-slider-thumb]:rounded-full [&::-webkit-slider-thumb]:border-2 [&::-webkit-slider-thumb]:border-[#c8c8cb] [&::-webkit-slider-thumb]:bg-[#38343a]"
        />
        <button aria-label="Zoom in">
          <svg viewBox="0 0 7 7" className="size-[7px]" stroke="#c8c8cb" strokeWidth="1.400"><path d="M3.500 0v7M0 3.500h7" /></svg>
        </button>
        <button aria-label="Fit to window" className="ml-[6px]">
          <svg viewBox="0 0 11 11" className="size-[11px]" fill="none" stroke="#bfbfc3"><path d="M.5.500h10v10H.5zM2 2l2.500 2.500M9 2L6.500 4.500M2 9l2.500-2.500M9 9L6.500 6.500M2.500 4v-1.500H4M7 2.500h1.500V4M2.500 7v1.500H4M7 8.500h1.500V7" /></svg>
        </button>
      </div>
    </footer>
  );
}

export default function App() {
  return (
    <div className="relative flex h-screen min-h-[640px] flex-col border-l border-r-2 border-l-[#dfe4e8] border-r-[#c9d0e2] bg-white font-['Open_Sans','Noto_Sans',sans-serif]">
      <Header />
      <Ribbon />
      <DocumentTabs />
      <main className="flex min-h-0 flex-1">
        <ScenesPanel />
        <div className="flex min-w-0 flex-1 flex-col">
          <Stage />
          <div className="flex h-[18px] shrink-0 border-y border-[#dfe4e7]">
            <button aria-label="Scroll stage left" className="flex w-[17px] items-center justify-center bg-white"><Arrow dir="left" /></button>
            <div className="flex-1 bg-[#a0aab0]" />
            <div className="w-9 bg-white" />
          </div>
          <Timeline />
        </div>
        <aside className="flex w-[265px] shrink-0 flex-col border-l border-[#dde3e7] bg-[#f0f4f7] text-[10px] text-[#525d64]">
          <TriggersPanel />
          <LayersPanel />
        </aside>
      </main>
      <StatusBar />
      <TriggerWizard />
    </div>
  );
}
